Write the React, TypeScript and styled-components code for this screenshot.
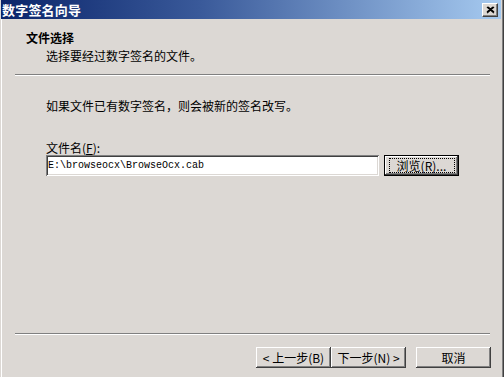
import styled, { createGlobalStyle } from "styled-components";

const GlobalStyle = createGlobalStyle`
  html, body {
    margin: 0;
    padding: 0;
    background: #dcd8d4;
  }
  body {
    font-family: "Noto Sans CJK SC", "Liberation Sans", sans-serif;
    font-size: 12px;
    color: #000;
  }
`;

const FACE = "#dcd8d4";

export default function App() {
  return (
    <>
      <GlobalStyle />
      <Window>
        <TitleBar>
          <Title>数字签名向导</Title>
          <CloseBox aria-label="关闭">
            <svg width="9" height="8" viewBox="0 0 9 8">
              <path d="M1 1L8 7M2 1L8 6M8 1L1 7M7 1L1 6" stroke="#000" strokeWidth="1.3" fill="none" />
            </svg>
          </CloseBox>
        </TitleBar>

        <Header>
          <HeaderTitle>文件选择</HeaderTitle>
          <HeaderSub>选择要经过数字签名的文件。</HeaderSub>
        </Header>
        <Etched />

        <Body>
          <Para>如果文件已有数字签名，则会被新的签名改写。</Para>
          <Label>
            文件名(<u>F</u>):
          </Label>
          <FieldRow>
            <TextInput defaultValue="E:\browseocx\BrowseOcx.cab" />
            <Button $default $width={75}>
              <Focus>
                浏览(<u>R</u>)...
              </Focus>
            </Button>
          </FieldRow>
        </Body>

        <Etched />
        <Footer>
          <Button $width={75}>
            &lt; 上一步(<u>B</u>)
          </Button>
          <Button $width={75}>
            下一步(<u>N</u>) &gt;
          </Button>
          <Gap />
          <Button $width={75}>取消</Button>
        </Footer>
      </Window>
    </>
  );
}

const Window = styled.div`
  width: 504px;
  height: 377px;
  box-sizing: border-box;
  display: flex;
  flex-direction: column;
  background: ${FACE};
  border-left: 1px solid ${FACE};
  border-right: 1px solid #404040;
  box-shadow: inset 1px 0 #ffffff, inset -1px 0 #808080, inset -2px 0 ${FACE};
`;

const TitleBar = styled.div`
  position: relative;
  height: 19px;
  flex: none;
  width: 500px;
  display: flex;
  align-items: center;
  padding: 0 3px 0 1px;
  box-sizing: border-box;
  background: linear-gradient(to right, #0a246a 0%, #3a5a9a 40%, #a6caf0 100%);
`;

const Title = styled.span`
  color: #ffffff;
  font-weight: bold;
  font-size: 13px;
  line-height: 19px;
  letter-spacing: 0.2px;
`;

const CloseBox = styled.span`
  position: absolute;
  top: 3px;
  right: 3px;
  width: 16px;
  height: 14px;
  box-sizing: border-box;
  display: flex;
  align-items: center;
  justify-content: center;
  background-color: ${FACE};
  border-top: 1px solid #ffffff;
  border-left: 1px solid #ffffff;
  border-right: 1px solid #404040;
  border-bottom: 1px solid #404040;
  box-shadow: inset -1px -1px #808080;
`;

const Header = styled.div`
  padding: 12px 0 12px 25px;
  display: flex;
  flex-direction: column;
  gap: 5px;
`;

const HeaderTitle = styled.div`
  font-weight: bold;
  line-height: 13px;
`;

const HeaderSub = styled.div`
  padding-left: 20px;
  line-height: 13px;
`;

const Etched = styled.div`
  flex: none;
  height: 1px;
  margin: 0 13px 0 14px;
  background: #808080;
  border-bottom: 1px solid #ffffff;
`;

const Body = styled.div`
  flex: 1;
  padding: 23px 0 0 45px;
  display: flex;
  flex-direction: column;
`;

const Para = styled.div`
  line-height: 13px;
`;

const Label = styled.div`
  margin-top: 29px;
  line-height: 13px;
`;

const FieldRow = styled.div`
  margin-top: 1px;
  display: flex;
  align-items: center;
  gap: 5px;
`;

const TextInput = styled.input`
  width: 333px;
  height: 21px;
  box-sizing: border-box;
  margin: 0;
  padding: 0 0 0 2px;
  border: none;
  outline: none;
  background: #ffffff;
  font-family: "Liberation Mono", monospace;
  font-size: 10px;
  color: #000;
  box-shadow: inset 1px 1px #808080, inset -1px -1px #ffffff,
    inset 2px 2px #404040, inset -2px -2px ${FACE};
`;

const Button = styled.div<{ $default?: boolean; $width: number }>`
  width: ${(p) => p.$width}px;
  height: 21px;
  box-sizing: border-box;
  display: flex;
  align-items: center;
  justify-content: center;
  background: ${FACE};
  line-height: 13px;
  white-space: nowrap;
  border: ${(p) => (p.$default ? "1px solid #000" : "none")};
  box-shadow: inset -1px -1px #404040, inset 1px 1px #ffffff,
    inset -2px -2px #808080;
  u {
    text-decoration: none;
  }
`;

const Focus = styled.span`
  display: flex;
  align-items: center;
  justify-content: center;
  width: 64px;
  height: 13px;
  outline: 1px dotted #000;
`;

const Footer = styled.div`
  height: 42px;
  flex: none;
  display: flex;
  align-items: flex-start;
  padding: 12px 0 0 255px;
  box-sizing: border-box;
`;

const Gap = styled.div`
  width: 10px;
`;
